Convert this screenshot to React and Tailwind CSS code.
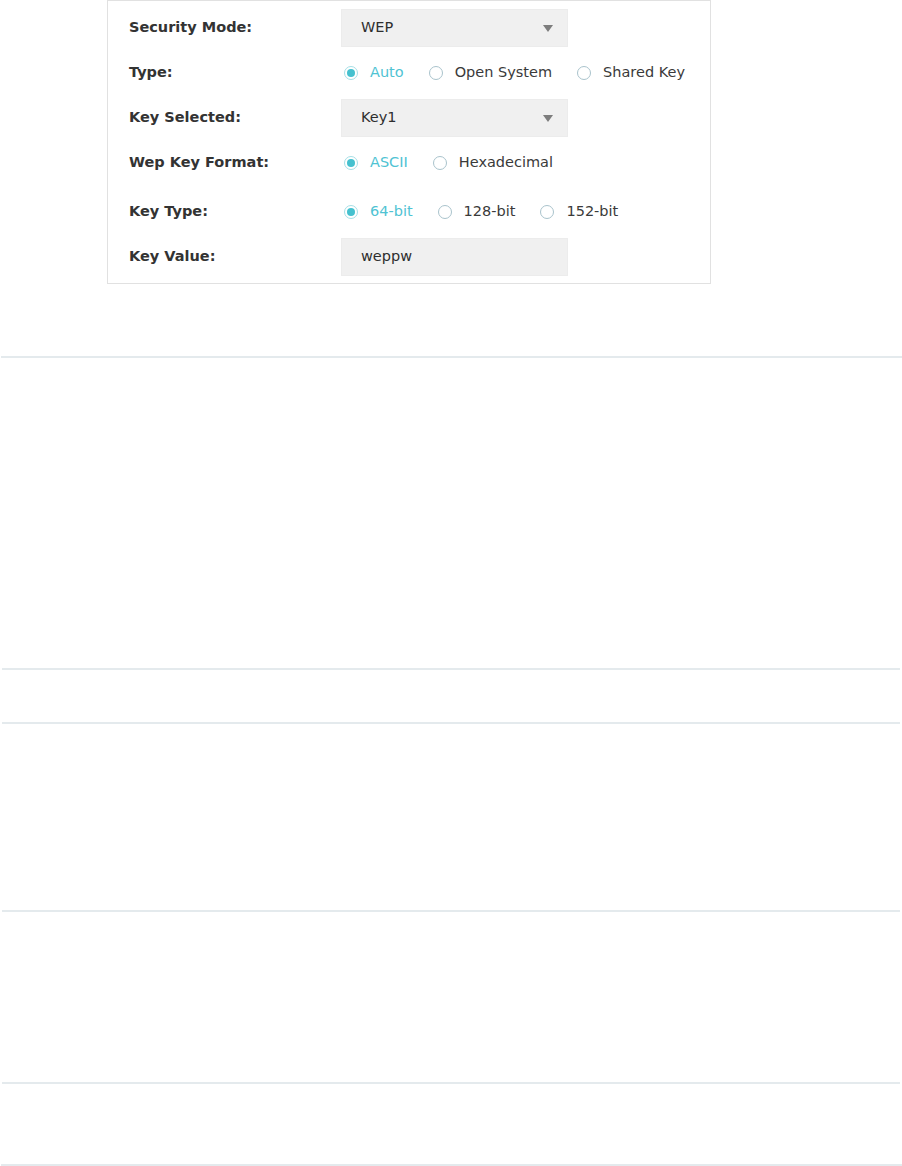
import React from "react";

const font = { fontFamily: '"DejaVu Sans", Verdana, sans-serif' };

function Radio({ label, checked, first }) {
  return (
    <div className={"flex items-center mr-[25px] " + (first ? "ml-[3px]" : "")}>
      <span
        className={
          "w-[14px] h-[14px] rounded-full border flex items-center justify-center bg-white " +
          (checked ? "border-[#a6dfe6]" : "border-[#a9c3cc]")
        }
      >
        {checked && <span className="w-[8px] h-[8px] rounded-full bg-[#45c1cf]" />}
      </span>
      <span className={"ml-[12px] text-[14.5px] " + (checked ? "text-[#4fc3d3]" : "text-[#3a3a3a]")}>{label}</span>
    </div>
  );
}

function Select({ value, arrow }) {
  return (
    <div className="w-[227px] h-[38px] bg-[#f0f0f0] border border-[#ececec] flex items-center pl-[19px] pr-[14px] justify-between">
      <span className="text-[14.5px] text-[#2e2e2e]">{value}</span>
      {arrow && (
        <svg width="10" height="7" viewBox="0 0 10 7">
          <path d="M0 0 L10 0 L5 7 Z" fill="#7d7d7d" />
        </svg>
      )}
    </div>
  );
}

function Row({ label, children, mt }) {
  return (
    <div className={"flex items-center h-[38px] " + mt}>
      <div className="w-[212px] pl-[21px] box-content text-[14.5px] font-bold text-[#333]">{label}</div>
      <div className="flex items-center">{children}</div>
    </div>
  );
}

export default function App() {
  return (
    <div className="w-[902px] h-[1166px] bg-white flex flex-col" style={font}>
      <div className="ml-[107px] w-[604px] h-[284px] border border-[#e1e1e1] pt-[8px] flex flex-col">
        <Row label="Security Mode:" mt="mt-0">
          <Select value="WEP" arrow />
        </Row>
        <Row label="Type:" mt="mt-[7px]">
          <Radio label="Auto" checked first />
          <Radio label="Open System" />
          <Radio label="Shared Key" />
        </Row>
        <Row label="Key Selected:" mt="mt-[7px]">
          <Select value="Key1" arrow />
        </Row>
        <Row label="Wep Key Format:" mt="mt-[7px]">
          <Radio label="ASCII" checked first />
          <Radio label="Hexadecimal" />
        </Row>
        <Row label="Key Type:" mt="mt-[11px]">
          <Radio label="64-bit" checked first />
          <Radio label="128-bit" />
          <Radio label="152-bit" />
        </Row>
        <Row label="Key Value:" mt="mt-[7px]">
          <Select value="weppw" />
        </Row>
      </div>
      <div className="mt-[72px] h-[2px] bg-[#e4eaed] ml-px" />
      <div className="mt-[310px] h-[2px] bg-[#e4eaed] mx-[2px]" />
      <div className="mt-[52px] h-[2px] bg-[#e4eaed] mx-[2px]" />
      <div className="mt-[186px] h-[2px] bg-[#e4eaed] mx-[2px]" />
      <div className="mt-[170px] h-[2px] bg-[#e4eaed] mx-[2px]" />
      <div className="mt-[80px] h-[2px] bg-[#e4eaed] ml-px" />
    </div>
  );
}
